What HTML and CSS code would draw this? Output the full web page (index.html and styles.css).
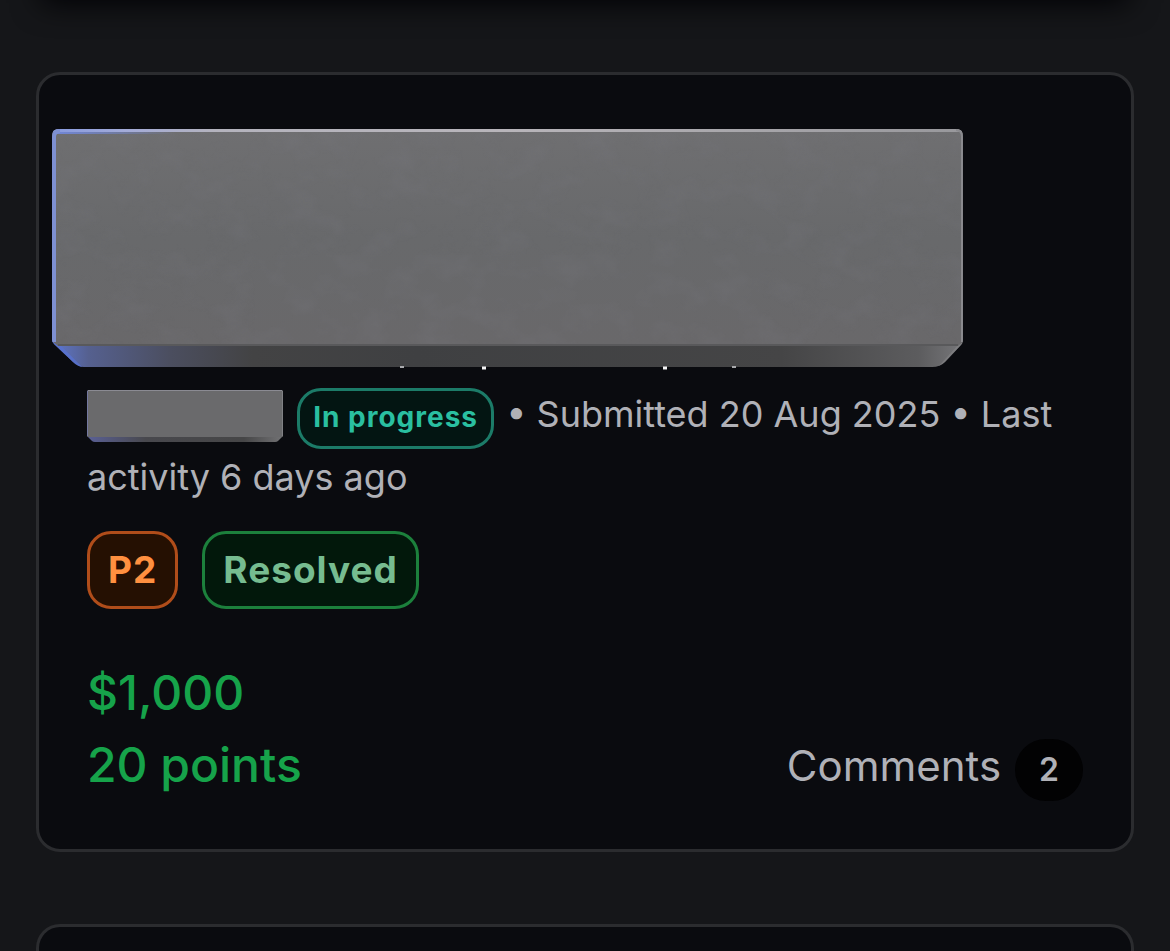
FILE: index.html
```html
<!DOCTYPE html>
<html lang="en">
<head>
  <meta charset="UTF-8">
  <meta name="viewport" content="width=device-width, initial-scale=1">
  <title>Submissions</title>
  <link rel="stylesheet" href="styles.css">
</head>
<body>
  <main class="list">
    <div class="card-above"></div>

    <article class="card">
      <svg class="cover" viewBox="0 0 912 241" aria-hidden="true">
        <defs>
          <linearGradient id="face" x1="0" y1="0" x2="0" y2="1">
            <stop offset="0" stop-color="#6f6f71"/>
            <stop offset="0.5" stop-color="#68696b"/>
            <stop offset="1" stop-color="#69686a"/>
          </linearGradient>
          <linearGradient id="bevel" x1="0" y1="0" x2="1" y2="0">
            <stop offset="0" stop-color="#5f77cc"/>
            <stop offset="0.04" stop-color="#55608f"/>
            <stop offset="0.13" stop-color="#4b4e5f"/>
            <stop offset="0.22" stop-color="#434344"/>
            <stop offset="0.4" stop-color="#3f4042"/>
            <stop offset="0.8" stop-color="#454546"/>
            <stop offset="0.95" stop-color="#5c5c5e"/>
            <stop offset="1" stop-color="#77777a"/>
          </linearGradient>
          <linearGradient id="topEdge" x1="0" y1="0" x2="1" y2="0">
            <stop offset="0" stop-color="#879ae0"/>
            <stop offset="0.08" stop-color="#a3abd8"/>
            <stop offset="0.18" stop-color="#b4b3bd"/>
            <stop offset="0.5" stop-color="#b8b5ba"/>
            <stop offset="1" stop-color="#98989c"/>
          </linearGradient>
          <linearGradient id="innerGlow" x1="0" y1="0" x2="1" y2="0">
            <stop offset="0" stop-color="#7187d8"/>
            <stop offset="1" stop-color="#7187d8" stop-opacity="0"/>
          </linearGradient>
          <filter id="mottle" x="0" y="0" width="1" height="1">
            <feTurbulence type="fractalNoise" baseFrequency="0.03 0.04" numOctaves="4" seed="7"/>
            <feColorMatrix values="0 0 0 0 0.2  0 0 0 0 0.2  0 0 0 0 0.23  0.7 0 0 0 -0.3"/>
          </filter>
          <clipPath id="block">
            <path d="M7 0 H904 Q911 0 911 7 V211 Q911 214 909 216 L893 233 Q888 238 880 238 H32 Q26 238 21 233 L2 215 Q0 213 0 211 V7 Q0 0 7 0 Z"/>
          </clipPath>
        </defs>
        <g clip-path="url(#block)">
          <rect width="912" height="238" fill="url(#bevel)"/>
          <path d="M2 214 L28 240" stroke="#5873d4" stroke-width="6" opacity="0.7"/>
          <path d="M910 214 L886 240" stroke="#8a8a8c" stroke-width="3" opacity="0.5"/>
          <path d="M0 0 H912 V212 L906 217 H6 L0 212 Z" fill="url(#face)"/>
          <rect x="4" y="4" width="904" height="211" filter="url(#mottle)" opacity="0.6"/>
          <rect x="6" y="215" width="900" height="2" fill="#59595b"/>
          <rect x="0" y="0" width="912" height="3" fill="url(#topEdge)"/>
          <rect x="3" y="3" width="120" height="2" fill="url(#innerGlow)"/>
          <path d="M8 2 Q2 2 2 8 V213" fill="none" stroke="#7e90d2" stroke-width="4"/>
          <path d="M904 1 Q910 1 910 8 V213" fill="none" stroke="#8a8a8e" stroke-width="2"/>
        </g>
        <path d="M348 238 h4 M680 238 h4" stroke="#a9aaad" stroke-width="2"/>
        <path d="M430 239 h4 M611 239 h4" stroke="#f4f4f5" stroke-width="3"/>
      </svg>

      <p class="meta">
        <svg class="cover-small" viewBox="0 0 196 52" aria-hidden="true">
          <defs>
            <linearGradient id="bevelSmall" x1="0" y1="0" x2="1" y2="0">
              <stop offset="0" stop-color="#5a6096"/>
              <stop offset="0.3" stop-color="#48484d"/>
              <stop offset="0.8" stop-color="#464647"/>
              <stop offset="1" stop-color="#727274"/>
            </linearGradient>
          </defs>
          <path d="M0 2 Q0 0 2 0 H194 Q196 0 196 2 V46 L191 51 Q190 52 188 52 H8 Q6 52 5 51 L0 46 Z" fill="url(#bevelSmall)"/>
          <path d="M0 2 Q0 0 2 0 H194 Q196 0 196 2 V46 L195 47 H1 L0 46 Z" fill="#6a6a6c"/>
          <rect x="1" y="0" width="194" height="1" fill="#8b8b93"/>
          <rect x="0" y="1" width="1" height="45" fill="#7378a0"/>
          <rect x="195" y="1" width="1" height="45" fill="#818185"/>
        </svg>
        <span class="status">In progress</span>
        • Submitted 20 Aug 2025 • Last activity 6 days ago
      </p>

      <div class="badges">
        <span class="badge priority">P2</span>
        <span class="badge resolved">Resolved</span>
      </div>

      <div class="footer">
        <div class="reward">
          <div>$1,000</div>
          <div>20 points</div>
        </div>
        <a class="comments" href="#comments">Comments <span class="count">2</span></a>
      </div>
    </article>

    <article class="card card-next"></article>
  </main>
</body>
</html>
```
FILE: styles.css
```css
* {
  box-sizing: border-box;
  margin: 0;
  padding: 0;
}

body {
  font-family: Inter, "Liberation Sans", sans-serif;
  background: #151619;
  color: #b0b1b7;
}

.list {
  display: flex;
  flex-direction: column;
  gap: 72px;
  min-height: 100vh;
  padding: 0 36px;
  overflow: hidden;
}

/* only the shadow of the card above is in view */
.card-above {
  height: 60px;
  margin: -60px 6px 0;
  box-shadow: 0 3px 30px #000104;
}

.card {
  background: #0a0b0f;
  border: 3px solid #2b2c2f;
  border-radius: 24px;
  padding: 54px 48px 48px;
}

.card-next {
  flex: 1;
  border-bottom: none;
  border-radius: 24px 24px 0 0;
  padding: 0;
}

/* hides the title, reaches into the card padding */
.cover {
  display: block;
  width: 912px;
  max-width: 100%;
  margin-left: -35px;
}

.cover-small {
  width: 196px;
  height: 52px;
  vertical-align: -15px;
}

.meta {
  margin-top: 13px;
  font-size: 36px;
  line-height: 63px;
}

.status {
  margin: 0 2px 0 4px;
  padding: 9px 13px 12px;
  border: 3px solid #1c7b68;
  border-radius: 24px;
  background: #031512;
  color: #2abfa0;
  font-size: 28px;
  font-weight: 700;
  line-height: 34px;
  letter-spacing: 1px;
}

.badges {
  display: flex;
  gap: 24px;
  margin-top: 22px;
}

.badge {
  padding: 9px 18px;
  border: 3px solid;
  border-radius: 24px;
  font-size: 37px;
  font-weight: 700;
  line-height: 54px;
  letter-spacing: 1px;
}

.priority {
  background: #251002;
  border-color: #b04d1a;
  color: #ff9040;
}

.resolved {
  background: #02180b;
  border-color: #1c803c;
  color: #76bc90;
}

.footer {
  display: flex;
  justify-content: space-between;
  align-items: flex-end;
  margin-top: 48px;
}

.reward {
  color: #16a34a;
  font-size: 48px;
  font-weight: 500;
  line-height: 72px;
}

.comments {
  display: flex;
  align-items: baseline;
  gap: 14px;
  color: inherit;
  font-size: 42px;
  line-height: 54px;
  text-decoration: none;
}

.count {
  padding: 4px 24px;
  border-radius: 31px;
  background: #020203;
  font-size: 32px;
  font-weight: 600;
}
```
